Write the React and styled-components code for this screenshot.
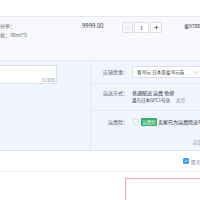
import React from 'react';
import styled, { createGlobalStyle } from 'styled-components';

const Global = createGlobalStyle`
  html, body { margin: 0; padding: 0; background: #ffffff; }
  body { font-family: "Noto Sans CJK SC", "Noto Sans", sans-serif; }
  #root { width: 200px; height: 200px; overflow: hidden; }
`;

const Page = styled.div`
  width: 200px;
  height: 200px;
  overflow: hidden;
  display: flex;
  flex-direction: column;
  font-size: 5px;
  color: #303133;
  white-space: nowrap;
`;

const TopGap = styled.div`
  flex: none;
  height: 17px;
  box-sizing: border-box;
  border-bottom: 1px solid #e4e9f2;
`;

const ItemRow = styled.div`
  flex: none;
  height: 44px;
  box-sizing: border-box;
  padding-top: 4px;
  background: #f7f9fd;
  border-bottom: 1px solid #e6ecf7;
  display: flex;
  align-items: flex-start;
`;

const Props = styled.div`
  flex: none;
  width: 87px;
  margin-left: -5px;
  line-height: 9px;
  color: #606266;
`;

const Price = styled.div`
  flex: none;
  width: 40px;
  font-size: 6px;
  line-height: 9px;
  color: #303133;
`;

const Stepper = styled.div`
  flex: none;
  display: flex;
  gap: 1px;
  margin-top: 1px;
`;

const StepBtn = styled.div`
  width: ${p => p.$w}px;
  height: 11px;
  box-sizing: border-box;
  border: 1px solid #dcdfe6;
  border-radius: 1px;
  background: ${p => (p.$disabled ? '#f5f7fa' : '#ffffff')};
  color: ${p => (p.$disabled ? '#c0c4cc' : '#303133')};
  display: flex;
  align-items: center;
  justify-content: center;
`;

const QtyBox = styled.div`
  width: 15px;
  height: 11px;
  box-sizing: border-box;
  border: 1px solid #dcdfe6;
  border-radius: 1px;
  background: #ffffff;
  display: flex;
  align-items: center;
  justify-content: center;
  font-size: 5px;
  color: #303133;
`;

const Subtotal = styled.div`
  flex: none;
  margin-left: 22px;
  line-height: 9px;
  color: #303133;
`;

const Section = styled.div`
  flex: none;
  height: 90px;
  box-sizing: border-box;
  background: #f0f5ff;
  border-bottom: 1px solid #d6e2fb;
  display: flex;
`;

const LeftCol = styled.div`
  flex: none;
  width: 110px;
  margin-left: -20px;
  padding-top: 4px;
  box-sizing: border-box;
`;

const TextWrap = styled.div`
  position: relative;
  width: 77px;
  height: 19px;
`;

const Memo = styled.textarea`
  display: block;
  width: 100%;
  height: 100%;
  box-sizing: border-box;
  margin: 0;
  padding: 2px 3px;
  border: 1px solid #dcdfe6;
  border-radius: 1px;
  background: #ffffff;
  resize: none;
  outline: none;
  font-family: inherit;
  font-size: 5px;
`;

const Counter = styled.span`
  position: absolute;
  right: 2px;
  bottom: 1px;
  font-size: 5px;
  line-height: 6px;
  color: #909399;
`;

const RightCol = styled.div`
  flex: 1;
  min-width: 0;
  border-left: 1px solid #e3eaf8;
  display: flex;
  flex-direction: column;
`;

const FieldRow = styled.div`
  flex: ${p => (p.$grow ? '1' : 'none')};
  height: ${p => (p.$h ? `${p.$h}px` : 'auto')};
  box-sizing: border-box;
  padding-top: ${p => p.$pt || 0}px;
  padding-left: ${p => p.$pl || 0}px;
  border-bottom: ${p => (p.$line ? '1px solid #e3eaf8' : 'none')};
  display: flex;
  align-items: ${p => (p.$top ? 'flex-start' : 'center')};
`;

const Label = styled.div`
  flex: none;
  width: 37px;
  margin-right: 4px;
  text-align: right;
  line-height: 7.5px;
  color: #606266;
`;

const Select = styled.div`
  flex: none;
  width: 70px;
  height: 12px;
  box-sizing: border-box;
  padding: 0 3px 0 4px;
  border: 1px solid #dcdfe6;
  border-radius: 1px;
  background: #ffffff;
  display: flex;
  align-items: center;
  justify-content: space-between;
  font-size: 4.5px;
  color: #303133;
`;

const Lines = styled.div`
  display: flex;
  flex-direction: column;
`;

const Line = styled.div`
  line-height: 7.5px;
  font-size: ${p => p.$fs || 5}px;
  display: flex;
  gap: ${p => p.$gap || 0}px;
`;

const Muted = styled.span`
  color: #909399;
`;

const Check = styled.span`
  flex: none;
  width: 6px;
  height: 6px;
  box-sizing: border-box;
  margin-left: ${p => p.$ml || 0}px;
  border: 1px solid ${p => (p.$on ? '#409eff' : '#dcdfe6')};
  border-radius: 1px;
  background: ${p => (p.$on ? '#409eff' : '#ffffff')};
  display: flex;
  align-items: center;
  justify-content: center;
`;

const Tag = styled.span`
  flex: none;
  height: 8px;
  margin-left: 2px;
  padding: 0 1.3px;
  box-sizing: border-box;
  background: #2fb064;
  border-radius: 1px;
  color: #ffffff;
  font-size: 4.5px;
  line-height: 8px;
`;

const Note = styled.span`
  margin-left: 1px;
  color: #303133;
`;

const SumText = styled.span`
  color: #8a8d93;
`;

const Anon = styled.div`
  flex: none;
  height: 21px;
  box-sizing: border-box;
  padding-left: 183px;
  border-bottom: 1px solid #ebeef5;
  display: flex;
  align-items: center;
  gap: 2px;
  color: #909399;
`;

const RedBox = styled.div`
  flex: none;
  margin: 6px 0 0 125px;
  width: 100px;
  height: 40px;
  box-sizing: border-box;
  border: 1px solid #f7a3aa;
  border-bottom: none;
`;

const Tick = ({ color }) => (
  <svg width="4" height="4" viewBox="0 0 4 4">
    <polyline points="0.6,2 1.6,3 3.4,0.9" fill="none" stroke={color} strokeWidth="0.8" />
  </svg>
);

const Minus = () => (
  <svg width="5" height="5" viewBox="0 0 5 5">
    <line x1="0.5" y1="2.5" x2="4.5" y2="2.5" stroke="currentColor" strokeWidth="0.6" />
  </svg>
);

const Plus = () => (
  <svg width="5" height="5" viewBox="0 0 5 5">
    <line x1="0.3" y1="2.5" x2="4.7" y2="2.5" stroke="currentColor" strokeWidth="0.6" />
    <line x1="2.5" y1="0.3" x2="2.5" y2="4.7" stroke="currentColor" strokeWidth="0.6" />
  </svg>
);

const Chevron = () => (
  <svg width="5" height="3" viewBox="0 0 5 3">
    <polyline points="0.4,0.4 2.5,2.5 4.6,0.4" fill="none" stroke="#909399" strokeWidth="0.5" />
  </svg>
);

export default function App() {
  return (
    <>
      <Global />
      <Page>
        <TopGap />
        <ItemRow>
          <Props>
            <div>积分率：-</div>
            <div>规格：30ml*5</div>
          </Props>
          <Price>9999.00</Price>
          <Stepper>
            <StepBtn $w={11} $disabled><Minus /></StepBtn>
            <QtyBox>1</QtyBox>
            <StepBtn $w={12}><Plus /></StepBtn>
          </Stepper>
          <Subtotal>省9700.00</Subtotal>
        </ItemRow>
        <Section>
          <LeftCol>
            <TextWrap>
              <Memo readOnly value="" />
              <Counter>0/200</Counter>
            </TextWrap>
          </LeftCol>
          <RightCol>
            <FieldRow $h={23} $line>
              <Label>店铺优惠：</Label>
              <Select>
                <span>省30元:日本美妆30元券</span>
                <Chevron />
              </Select>
            </FieldRow>
            <FieldRow $h={27} $pt={5} $top $line>
              <Label>运送方式：</Label>
              <Lines>
                <Line>普通配送 运费 免邮</Line>
                <Line $fs={4.5} $gap={6}>
                  <span>菜鸟日本GFC1号仓</span>
                  <Muted>发货</Muted>
                </Line>
              </Lines>
            </FieldRow>
            <FieldRow $h={21}>
              <Label>运费险：</Label>
              <Check $ml={1}><Tick color="#c0c4cc" /></Check>
              <Tag>运费险</Tag>
              <Note>卖家已为运费险送单，退货可获赔付</Note>
            </FieldRow>
            <FieldRow $grow $pl={102}>
              <SumText>店铺合计（含运费）</SumText>
            </FieldRow>
          </RightCol>
        </Section>
        <Anon>
          <Check $on><Tick color="#ffffff" /></Check>
          <span>匿名购买</span>
        </Anon>
        <RedBox />
      </Page>
    </>
  );
}
